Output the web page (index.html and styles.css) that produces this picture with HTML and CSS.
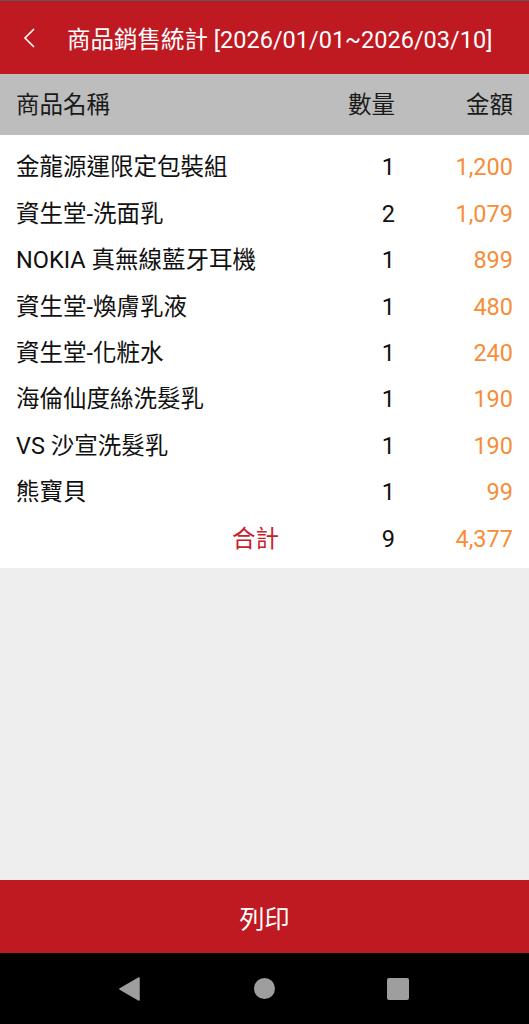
FILE: index.html
```html
<!DOCTYPE html>
<html>
<head>
  <meta charset="utf-8">
  <title>商品銷售統計</title>
  <link rel="stylesheet" href="styles.css">
</head>
<body>
  <div class="screen">
    <header class="topbar">
      <span class="back">
        <svg width="14" height="22" viewBox="0 0 14 22">
          <path d="M12 2 L3 11 L12 20" fill="none" stroke="#fff" stroke-width="1.6"/>
        </svg>
      </span>
      <h1 class="title">商品銷售統計 [2026/01/01~2026/03/10]</h1>
    </header>

    <div class="table-head row">
      <span class="name">商品名稱</span>
      <span class="qty">數量</span>
      <span class="amount head-amount">金額</span>
    </div>

    <div class="list">
      <div class="row"><span class="name">金龍源運限定包裝組</span><span class="qty">1</span><span class="amount">1,200</span></div>
      <div class="row"><span class="name">資生堂-洗面乳</span><span class="qty">2</span><span class="amount">1,079</span></div>
      <div class="row"><span class="name">NOKIA 真無線藍牙耳機</span><span class="qty">1</span><span class="amount">899</span></div>
      <div class="row"><span class="name">資生堂-煥膚乳液</span><span class="qty">1</span><span class="amount">480</span></div>
      <div class="row"><span class="name">資生堂-化粧水</span><span class="qty">1</span><span class="amount">240</span></div>
      <div class="row"><span class="name">海倫仙度絲洗髮乳</span><span class="qty">1</span><span class="amount">190</span></div>
      <div class="row"><span class="name">VS 沙宣洗髮乳</span><span class="qty">1</span><span class="amount">190</span></div>
      <div class="row"><span class="name">熊寶貝</span><span class="qty">1</span><span class="amount">99</span></div>
      <div class="row total"><span class="name total-label">合計</span><span class="qty">9</span><span class="amount">4,377</span></div>
    </div>

    <div class="filler"></div>

    <button class="print">列印</button>

    <nav class="navbar">
      <svg width="22" height="24" viewBox="0 0 22 24"><path d="M20 1 L20 23 L1 12 Z" fill="#9e9e9e" stroke="#9e9e9e" stroke-width="1.5" stroke-linejoin="round"/></svg>
      <span class="nav-home"></span>
      <span class="nav-recent"></span>
    </nav>
  </div>
</body>
</html>
```

FILE: styles.css
```css
* {
  box-sizing: border-box;
}

body {
  margin: 0;
  font-family: Roboto, "Noto Sans CJK TC", sans-serif;
  background: #000;
}

.screen {
  display: flex;
  flex-direction: column;
  height: 1024px;
  background: #eeeeee;
}

.topbar {
  display: flex;
  align-items: center;
  height: 74px;
  border-top: 1px solid #5a5a5a;
  background: #bf1922;
  color: #fff;
}

.back {
  display: flex;
  width: 67px;
  padding-left: 22px;
}

.title {
  margin: 0;
  font-size: 23.5px;
  font-weight: normal;
  white-space: nowrap;
}

.row {
  display: grid;
  grid-template-columns: 1fr 100px 118px;
  align-items: center;
  height: 46.4px;
  padding: 4px 16px 0;
  font-size: 23.5px;
  line-height: 1;
  color: #111;
}

.table-head {
  height: 61px;
  padding-top: 3px;
  background: #bdbdbd;
  color: #1a1a1a;
}

.qty,
.amount {
  text-align: right;
}

.amount {
  color: #f68d38;
}

.head-amount {
  color: #1a1a1a;
}

.list {
  padding: 8px 0 7px;
  background: #fff;
}

.total-label {
  text-align: right;
  padding-right: 16px;
  color: #c8202a;
}

.filler {
  flex: 1;
}

.print {
  height: 73px;
  padding-right: 6px;
  border: none;
  background: #bf1922;
  color: #fff;
  font-family: inherit;
  font-size: 25px;
}

.navbar {
  display: flex;
  align-items: center;
  justify-content: space-between;
  height: 71px;
  padding: 0 120px 0 119px;
  background: #000;
}

.nav-home {
  width: 21px;
  height: 21px;
  border-radius: 50%;
  background: #9e9e9e;
}

.nav-recent {
  width: 22px;
  height: 22px;
  border-radius: 2px;
  background: #9e9e9e;
}
```
